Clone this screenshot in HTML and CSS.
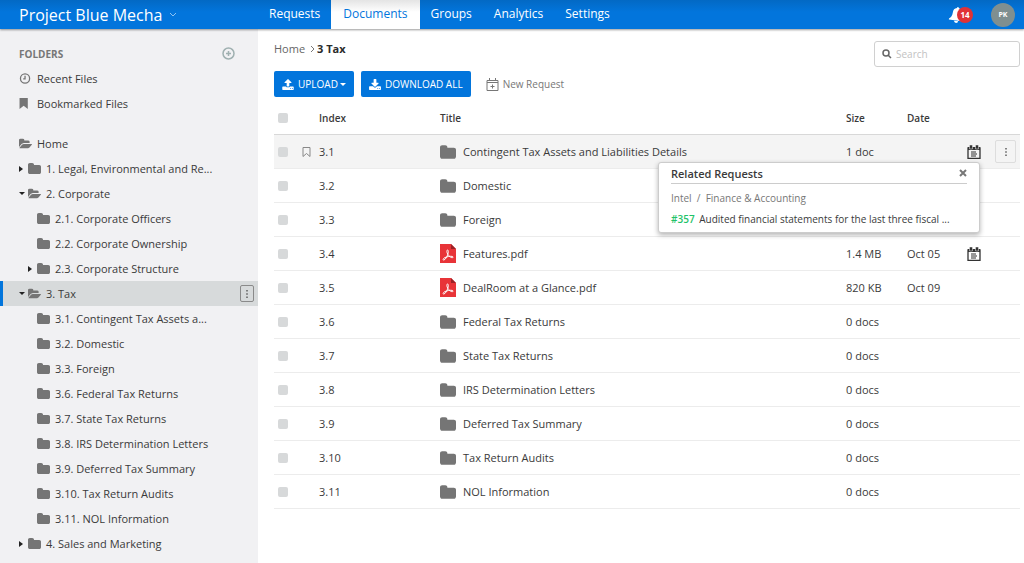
FILE: index.html
```html
<!DOCTYPE html>
<html lang="en">
  <head>
    <meta charset="UTF-8" />
    <meta name="viewport" content="width=device-width, initial-scale=1" />
    <title>Project Blue Mecha</title>
    <link rel="stylesheet" href="styles.css">
  </head>
  <body>
    <!-- shared icons -->
    <svg class="sprite" aria-hidden="true">
      <symbol id="folder" viewBox="64 128 1664 1408">
        <path d="M1728 608v704q0 92-66 158t-158 66h-1216q-92 0-158-66t-66-158v-960q0-92 66-158t158-66h320q92 0 158 66t66 158v32h672q92 0 158 66t66 158z" />
      </symbol>
      <symbol id="folder-open" viewBox="0 128 1880 1408">
        <path d="M1879 952q0 31-31 66l-336 396q-43 51-120.500 86.500t-143.500 35.500h-1088q-34 0-60.500-13t-26.500-43q0-31 31-66l336-396q43-51 120.500-86.500t143.500-35.500h1088q34 0 60.500 13t26.500 43zm-343-344v160h-832q-94 0-197 47.500t-164 119.500l-337 396-5 6q0-4-.5-12.500t-.5-12.500v-960q0-92 66-158t158-66h320q92 0 158 66t66 158v32h544q92 0 158 66t66 158z" />
      </symbol>
      <symbol id="upload" viewBox="64 64 1664 1600">
        <path d="M1344 1472q0-26-19-45t-45-19-45 19-19 45 19 45 45 19 45-19 19-45zm256 0q0-26-19-45t-45-19-45 19-19 45 19 45 45 19 45-19 19-45zm128-224v320q0 40-28 68t-68 28h-1472q-40 0-68-28t-28-68v-320q0-40 28-68t68-28h427q21 56 70.500 92t110.500 36h256q61 0 110.500-36t70.500-92h427q40 0 68 28t28 68zm-325-648q-17 40-59 40h-256v448q0 26-19 45t-45 19h-256q-26 0-45-19t-19-45v-448h-256q-42 0-59-40-17-39 14-69l448-448q18-19 45-19t45 19l448 448q31 30 14 69z" />
      </symbol>
      <symbol id="download" viewBox="64 0 1664 1536">
        <path d="M1344 1344q0-26-19-45t-45-19-45 19-19 45 19 45 45 19 45-19 19-45zm256 0q0-26-19-45t-45-19-45 19-19 45 19 45 45 19 45-19 19-45zm128-224v320q0 40-28 68t-68 28h-1472q-40 0-68-28t-28-68v-320q0-40 28-68t68-28h465l135 136q58 56 136 56t136-56l136-136h464q40 0 68 28t28 68zm-325-569q17 41-14 70l-448 448q-18 19-45 19t-45-19l-448-448q-31-29-14-70 17-39 59-39h256v-448q0-26 19-45t45-19h256q26 0 45 19t19 45v448h256q42 0 59 39z" />
      </symbol>
      <symbol id="pdf" viewBox="0 0 16 19">
        <path d="M0 0h11l5 5v14H0z" fill="#e83438" />
        <path d="M11 0l5 5h-5z" fill="#9c2226" />
        <path d="M7.500 6c1.300 0 .8 2.600.3 4.300-.7 2.200-2.300 5.400-3.900 5.700-1.500.2-.9-1.600 1-2.400 2-.9 5.600-1.600 7.300-1.200 1.500.4 1 1.600-.4 1.300C9.800 13.200 7.500 10.600 7 8.500 6.700 7 6.900 6 7.500 6z" fill="none" stroke="#fff" />
      </symbol>
      <symbol id="request" viewBox="0 0 14 14">
        <path d="M1 3h12v10.300H1z" fill="none" stroke="#333" stroke-width="1.300" />
        <path d="M1 2h12v3H1z" />
        <path d="M2.500 0h3v4h-3zM8.500 0h3v4h-3z" stroke="#f4f4f4" stroke-width=".5" />
        <path d="M4 7h5M4 9h6M4 11h5" stroke="#333" stroke-width="1.200" />
      </symbol>
      <symbol id="dots" viewBox="0 0 4 10">
        <path d="M1 0h2v2H1zM1 4h2v2H1zM1 8h2v2H1z" />
      </symbol>
    </svg>

    <header class="topbar">
      <button class="project" type="button">
        Project Blue Mecha
        <svg class="chevron" viewBox="0 0 8 5"><path d="M1 1l3 3 3-3" /></svg>
      </button>
      <nav class="tabs">
        <a href="#">Requests</a>
        <a href="#" class="active">Documents</a>
        <a href="#">Groups</a>
        <a href="#">Analytics</a>
        <a href="#">Settings</a>
      </nav>
      <button class="alerts" type="button" aria-label="Notifications">
        <svg class="bell" viewBox="0 0 16 16">
          <path d="M8 0c.7 0 1 .5 1 1 2.500.5 3.500 2.500 3.500 5 0 3 1 5 3 6.500V13.500H.5v-1C2.500 11 3.500 9 3.500 6c0-2.500 1-4.500 3.500-5 0-.5.3-1 1-1zM6 14h4c0 1.200-.8 2-2 2s-2-.8-2-2z" />
        </svg>
        <span class="count">14</span>
      </button>
      <button class="avatar" type="button">PK</button>
    </header>

    <div class="layout">
      <aside class="sidebar">
        <div class="side-head">
          <h2>FOLDERS</h2>
          <button class="add" type="button" aria-label="Add folder">
            <svg viewBox="0 0 13 13"><circle cx="6.500" cy="6.500" r="5.500" /><path d="M6.500 4v5M4 6.500h5" /></svg>
          </button>
        </div>
        <ul class="tree">
          <li>
            <a href="#">
              <svg class="icon clock" viewBox="0 0 13 12"><circle cx="6" cy="6" r="5" /><path d="M6 3v3.500H4" /></svg>
              Recent Files
            </a>
          </li>
          <li>
            <a href="#">
              <svg class="icon" viewBox="0 0 13 12"><path d="M0 0h9v12L4.500 8.500 0 12z" /></svg>
              Bookmarked Files
            </a>
          </li>
        </ul>
        <ul class="tree folders">
          <li><a href="#"><svg class="icon"><use href="#folder-open" /></svg>Home</a></li>
          <li><a href="#"><i class="caret right"></i><svg class="icon"><use href="#folder" /></svg>1. Legal, Environmental and Re...</a></li>
          <li>
            <a href="#"><i class="caret down"></i><svg class="icon"><use href="#folder-open" /></svg>2. Corporate</a>
            <ul>
              <li><a href="#"><i class="caret"></i><svg class="icon"><use href="#folder" /></svg>2.1. Corporate Officers</a></li>
              <li><a href="#"><i class="caret"></i><svg class="icon"><use href="#folder" /></svg>2.2. Corporate Ownership</a></li>
              <li><a href="#"><i class="caret right"></i><svg class="icon"><use href="#folder" /></svg>2.3. Corporate Structure</a></li>
            </ul>
          </li>
          <li>
            <div class="current">
              <a href="#"><i class="caret down"></i><svg class="icon"><use href="#folder-open" /></svg>3. Tax</a>
              <button class="more" type="button" aria-label="Folder menu"><svg><use href="#dots" /></svg></button>
            </div>
            <ul>
              <li><a href="#"><i class="caret"></i><svg class="icon"><use href="#folder" /></svg>3.1. Contingent Tax Assets a...</a></li>
              <li><a href="#"><i class="caret"></i><svg class="icon"><use href="#folder" /></svg>3.2. Domestic</a></li>
              <li><a href="#"><i class="caret"></i><svg class="icon"><use href="#folder" /></svg>3.3. Foreign</a></li>
              <li><a href="#"><i class="caret"></i><svg class="icon"><use href="#folder" /></svg>3.6. Federal Tax Returns</a></li>
              <li><a href="#"><i class="caret"></i><svg class="icon"><use href="#folder" /></svg>3.7. State Tax Returns</a></li>
              <li><a href="#"><i class="caret"></i><svg class="icon"><use href="#folder" /></svg>3.8. IRS Determination Letters</a></li>
              <li><a href="#"><i class="caret"></i><svg class="icon"><use href="#folder" /></svg>3.9. Deferred Tax Summary</a></li>
              <li><a href="#"><i class="caret"></i><svg class="icon"><use href="#folder" /></svg>3.10. Tax Return Audits</a></li>
              <li><a href="#"><i class="caret"></i><svg class="icon"><use href="#folder" /></svg>3.11. NOL Information</a></li>
            </ul>
          </li>
          <li><a href="#"><i class="caret right"></i><svg class="icon"><use href="#folder" /></svg>4. Sales and Marketing</a></li>
        </ul>
      </aside>

      <main class="content">
        <div class="content-head">
          <div class="crumbs">
            <a href="#">Home</a>
            <svg viewBox="0 0 5 8"><path d="M1 1l3 3-3 3" /></svg>
            <strong>3 Tax</strong>
          </div>
          <label class="search">
            <svg viewBox="0 0 10 10"><circle cx="4" cy="4" r="3" /><path d="M6 6l3 3" /></svg>
            <input type="text" placeholder="Search" aria-label="Search" />
          </label>
        </div>

        <div class="actions">
          <button class="btn" type="button"><svg><use href="#upload" /></svg>UPLOAD<i class="caret down"></i></button>
          <button class="btn" type="button"><svg><use href="#download" /></svg>DOWNLOAD ALL</button>
          <button class="link-btn" type="button">
            <svg viewBox="0 0 13 13"><path d="M1 2.500h11v10H1zM1 4.500h11M3.500 0v3M9.500 0v3M6.500 6.500v4M4.500 8.500h4" /></svg>
            New Request
          </button>
        </div>

        <table class="docs">
          <thead>
            <tr>
              <th class="c-check"><input type="checkbox" aria-label="Select all" /></th>
              <th class="c-mark"></th>
              <th class="c-index">Index</th>
              <th>Title</th>
              <th class="c-size">Size</th>
              <th class="c-date">Date</th>
              <th class="c-req"></th>
              <th class="c-menu"></th>
            </tr>
          </thead>
          <tbody>
            <tr class="hover">
              <td><input type="checkbox" aria-label="Select 3.1" /></td>
              <td><svg class="mark" viewBox="0 0 9 10"><path d="M1 .5h7v9L4.500 6.500 1 9.500z" /></svg></td>
              <td>3.1</td>
              <td><span class="name"><svg class="folder"><use href="#folder" /></svg>Contingent Tax Assets and Liabilities Details</span></td>
              <td>1 doc</td>
              <td></td>
              <td class="req">
                <svg class="request"><use href="#request" /></svg>
                <div class="popover">
                  <div class="pop-head">
                    <h3>Related Requests</h3>
                    <button type="button" aria-label="Close"><svg viewBox="0 0 8 8"><path d="M1 1l6 6M7 1L1 7" /></svg></button>
                  </div>
                  <p class="path">Intel&nbsp; /&nbsp; Finance &amp; Accounting</p>
                  <p><a href="#">#357</a> Audited financial statements for the last three fiscal ...</p>
                </div>
              </td>
              <td><button class="row-menu" type="button" aria-label="Row menu"><svg><use href="#dots" /></svg></button></td>
            </tr>
            <tr>
              <td><input type="checkbox" aria-label="Select 3.2" /></td>
              <td></td>
              <td>3.2</td>
              <td><span class="name"><svg class="folder"><use href="#folder" /></svg>Domestic</span></td>
              <td></td><td></td><td></td><td></td>
            </tr>
            <tr>
              <td><input type="checkbox" aria-label="Select 3.3" /></td>
              <td></td>
              <td>3.3</td>
              <td><span class="name"><svg class="folder"><use href="#folder" /></svg>Foreign</span></td>
              <td></td><td></td><td></td><td></td>
            </tr>
            <tr>
              <td><input type="checkbox" aria-label="Select 3.4" /></td>
              <td></td>
              <td>3.4</td>
              <td><span class="name"><svg class="pdf"><use href="#pdf" /></svg>Features.pdf</span></td>
              <td>1.4 MB</td>
              <td>Oct 05</td>
              <td><svg class="request"><use href="#request" /></svg></td>
              <td></td>
            </tr>
            <tr>
              <td><input type="checkbox" aria-label="Select 3.5" /></td>
              <td></td>
              <td>3.5</td>
              <td><span class="name"><svg class="pdf"><use href="#pdf" /></svg>DealRoom at a Glance.pdf</span></td>
              <td>820 KB</td>
              <td>Oct 09</td>
              <td></td><td></td>
            </tr>
            <tr>
              <td><input type="checkbox" aria-label="Select 3.6" /></td>
              <td></td>
              <td>3.6</td>
              <td><span class="name"><svg class="folder"><use href="#folder" /></svg>Federal Tax Returns</span></td>
              <td>0 docs</td>
              <td></td><td></td><td></td>
            </tr>
            <tr>
              <td><input type="checkbox" aria-label="Select 3.7" /></td>
              <td></td>
              <td>3.7</td>
              <td><span class="name"><svg class="folder"><use href="#folder" /></svg>State Tax Returns</span></td>
              <td>0 docs</td>
              <td></td><td></td><td></td>
            </tr>
            <tr>
              <td><input type="checkbox" aria-label="Select 3.8" /></td>
              <td></td>
              <td>3.8</td>
              <td><span class="name"><svg class="folder"><use href="#folder" /></svg>IRS Determination Letters</span></td>
              <td>0 docs</td>
              <td></td><td></td><td></td>
            </tr>
            <tr>
              <td><input type="checkbox" aria-label="Select 3.9" /></td>
              <td></td>
              <td>3.9</td>
              <td><span class="name"><svg class="folder"><use href="#folder" /></svg>Deferred Tax Summary</span></td>
              <td>0 docs</td>
              <td></td><td></td><td></td>
            </tr>
            <tr>
              <td><input type="checkbox" aria-label="Select 3.10" /></td>
              <td></td>
              <td>3.10</td>
              <td><span class="name"><svg class="folder"><use href="#folder" /></svg>Tax Return Audits</span></td>
              <td>0 docs</td>
              <td></td><td></td><td></td>
            </tr>
            <tr>
              <td><input type="checkbox" aria-label="Select 3.11" /></td>
              <td></td>
              <td>3.11</td>
              <td><span class="name"><svg class="folder"><use href="#folder" /></svg>NOL Information</span></td>
              <td>0 docs</td>
              <td></td><td></td><td></td>
            </tr>
          </tbody>
        </table>
      </main>
    </div>
  </body>
</html>
```

FILE: styles.css
```css
* {
  box-sizing: border-box;
}
body {
  margin: 0;
  font-family: "Open Sans", sans-serif;
  font-size: 11px;
  color: #3a3a3a;
  background: #fff;
}
button {
  font: inherit;
  color: inherit;
  background: none;
  border: 0;
  padding: 0;
  cursor: pointer;
}
a {
  color: inherit;
  text-decoration: none;
}
ul {
  list-style: none;
  margin: 0;
  padding: 0;
}
svg {
  display: block;
  flex: none;
}
.sprite {
  position: absolute;
  width: 0;
  height: 0;
}

/* top bar */
.topbar {
  position: relative;
  display: flex;
  align-items: center;
  height: 29px;
  padding-right: 9px;
  color: #fff;
  background: linear-gradient(#0369c4, #0275dc 12px);
  box-shadow: 0 1px 2px rgba(0, 0, 0, 0.4);
}
.project {
  display: flex;
  align-items: center;
  gap: 7px;
  width: 258px;
  padding-left: 19px;
  font-size: 16px;
}
.chevron {
  width: 8px;
  height: 5px;
  fill: none;
  stroke: #8fc3f3;
}
.tabs {
  display: flex;
  flex: 1;
  height: 29px;
  font-size: 12px;
  font-weight: 500;
  line-height: 27px;
}
.tabs a {
  padding: 0 11px;
}
.tabs .active {
  padding: 0 12px;
  color: #0275dc;
  background: linear-gradient(#e4e4e4, #fff 12px);
}
.alerts {
  display: flex;
  align-items: center;
  margin-right: 18px;
}
.bell {
  width: 16px;
  height: 16px;
  fill: #fff;
  transform: rotate(8deg);
}
.count {
  width: 16px;
  height: 16px;
  margin-left: -8px;
  border-radius: 50%;
  font-size: 8px;
  font-weight: 700;
  line-height: 16px;
  background: #e03236;
  z-index: 1;
}
.avatar {
  width: 24px;
  height: 24px;
  border-radius: 50%;
  font-size: 7px;
  font-weight: 700;
  background: #7f8f90;
}

/* sidebar */
.layout {
  display: flex;
  min-height: calc(100vh - 29px);
}
.sidebar {
  flex: none;
  width: 258px;
  padding-top: 12px;
  background: #f1f1f3;
}
.side-head {
  display: flex;
  align-items: center;
  justify-content: space-between;
  height: 25px;
  padding: 0 23px 0 19px;
}
.side-head h2 {
  margin: 0;
  font-size: 10px;
  font-weight: 700;
  color: #777;
}
.add svg {
  width: 13px;
  height: 13px;
  fill: none;
  stroke: #9fb0b0;
  stroke-width: 1.500;
}
.tree a {
  display: flex;
  flex: 1;
  align-items: center;
  height: 25px;
  padding-left: 19px;
  white-space: nowrap;
}
.tree ul a {
  padding-left: 28px;
}
.folders {
  margin-top: 15px;
}
.icon {
  width: 13px;
  height: 11px;
  margin-right: 5px;
  fill: #757575;
}
.clock {
  fill: none;
  stroke: #757575;
  stroke-width: 1.400;
}
.caret {
  flex: none;
  width: 9px;
}
.caret::before {
  display: block;
  width: 0;
  height: 0;
}
.right::before {
  content: "";
  border: 3px solid transparent;
  border-left: 4px solid #222;
  border-right: 0;
}
.down::before {
  content: "";
  border: 3px solid transparent;
  border-top: 3px solid #222;
  border-bottom: 0;
}
.current {
  display: flex;
  align-items: center;
  padding-right: 4px;
  background: #d7dadb;
  box-shadow: inset 3px 0 #0275dc;
}
.more {
  display: flex;
  align-items: center;
  justify-content: center;
  width: 14px;
  height: 17px;
  border: 1px solid #8a8a8a;
  border-radius: 2px;
}
.more svg,
.row-menu svg {
  width: 4px;
  height: 8px;
  fill: #666;
}

/* content */
.content {
  flex: 1;
  min-width: 0;
  padding: 12px 4px 0 16px;
}
.content-head {
  display: flex;
  justify-content: space-between;
}
.crumbs {
  display: flex;
  align-items: center;
  height: 15px;
  color: #666;
}
.crumbs svg {
  width: 5px;
  height: 8px;
  margin: 0 2px 0 5px;
  fill: none;
  stroke: #777;
}
.crumbs strong {
  color: #2b2b2b;
}
.search {
  display: flex;
  align-items: center;
  gap: 4px;
  width: 146px;
  height: 26px;
  padding: 0 7px;
  border: 1px solid #d0d0d0;
  border-radius: 3px;
}
.search svg {
  width: 10px;
  height: 10px;
  fill: none;
  stroke: #666;
  stroke-width: 1.500;
}
.search input {
  width: 100%;
  padding: 0;
  border: 0;
  outline: 0;
  font: inherit;
  font-size: 10px;
  background: none;
}
.search input::placeholder {
  color: #c2c2c2;
}
.actions {
  display: flex;
  gap: 7px;
  margin-top: 4px;
}
.btn {
  display: flex;
  align-items: center;
  gap: 4px;
  height: 26px;
  padding: 0 8px;
  border-radius: 2px;
  font-size: 10px;
  font-weight: 500;
  color: #fff;
  background: #0275dc;
}
.btn svg {
  width: 12px;
  height: 11px;
  fill: #fff;
}
.btn .caret {
  width: 6px;
  margin-left: -2px;
}
.btn .down::before {
  border-top-color: #fff;
}
.link-btn {
  display: flex;
  align-items: center;
  gap: 4px;
  padding-left: 8px;
  font-size: 10px;
  color: #777;
}
.link-btn svg {
  width: 13px;
  height: 13px;
  fill: none;
  stroke: #777;
}

/* documents table */
.docs {
  width: 100%;
  table-layout: fixed;
  border-collapse: separate;
  border-spacing: 0;
}
.docs th,
.docs td {
  height: 34px;
  padding: 0;
  border-bottom: 1px solid #ececec;
  text-align: left;
  white-space: nowrap;
}
.docs th {
  height: 38px;
  padding-top: 4px;
  border-bottom-color: #d8d8d8;
  font-size: 10px;
  font-weight: 600;
}
.c-check {
  width: 28px;
}
.c-mark {
  width: 17px;
}
.c-index {
  width: 121px;
}
.c-size {
  width: 61px;
}
.c-date {
  width: 60px;
}
.c-req {
  width: 28px;
}
.c-menu {
  width: 25px;
}
.docs input {
  display: block;
  appearance: none;
  width: 10px;
  height: 10px;
  margin: 0 0 0 4px;
  border-radius: 2px;
  background: #d7d9da;
}
.hover td {
  background: #f4f4f4;
}
.mark {
  width: 9px;
  height: 10px;
  fill: none;
  stroke: #888;
}
.name {
  display: flex;
  align-items: center;
  gap: 7px;
}
.folder {
  width: 16px;
  height: 14px;
  fill: #757575;
}
.pdf {
  width: 16px;
  height: 19px;
}
.request {
  width: 14px;
  height: 14px;
  fill: #333;
}
.row-menu {
  display: flex;
  align-items: center;
  justify-content: center;
  width: 21px;
  height: 23px;
  border: 1px solid #ddd;
  border-radius: 2px;
}
.req {
  position: relative;
}

/* popover under the request icon */
.popover {
  position: absolute;
  z-index: 1;
  top: 27px;
  right: 15px;
  width: 322px;
  height: 71px;
  padding: 0 12px;
  border: 1px solid #ccc;
  border-radius: 3px;
  background: #fff;
  box-shadow: 0 2px 5px rgba(0, 0, 0, 0.3);
}
.pop-head {
  display: flex;
  align-items: center;
  justify-content: space-between;
  height: 21px;
  border-bottom: 1px solid #ccc;
}
.pop-head h3 {
  margin: 0;
  font-size: 11px;
  font-weight: 600;
}
.pop-head svg {
  width: 8px;
  height: 8px;
  stroke: #777;
  stroke-width: 2;
}
.popover p {
  margin: 0;
  font-size: 10px;
  line-height: 21px;
}
.popover .path {
  margin-top: 4px;
  color: #777;
}
.popover a {
  margin-right: 2px;
  font-weight: 600;
  color: #1fc36a;
}
```
